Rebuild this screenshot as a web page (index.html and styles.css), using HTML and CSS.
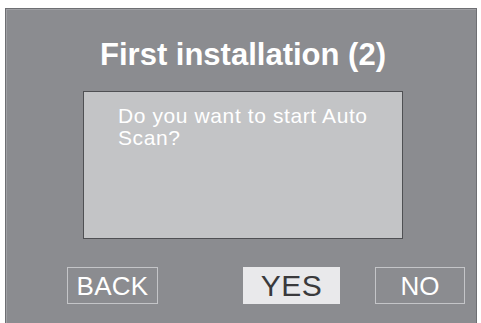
FILE: index.html
```html
<!DOCTYPE html>
<html>
<head>
<meta charset="utf-8">
<link rel="stylesheet" href="styles.css">
</head>
<body>
<div class="panel">
  <h1 class="title">First installation (2)</h1>
  <div class="message">Do you want to start Auto<br>Scan?</div>
  <div class="buttons">
    <div class="btn back">BACK</div>
    <div class="btn yes">YES</div>
    <div class="btn no">NO</div>
  </div>
</div>
</body>
</html>
```
FILE: styles.css
```css
html, body {
  margin: 0;
  padding: 0;
  background: #ffffff;
  width: 481px;
  height: 323px;
  overflow: hidden;
}
body {
  font-family: "Liberation Sans", Arial, sans-serif;
  padding-top: 8px;
  padding-left: 5px;
  box-sizing: border-box;
}
.panel {
  width: 472px;
  height: 320px;
  box-sizing: border-box;
  background: #8b8c90;
  border: 1px solid #6e6f73;
  box-shadow: inset 1px 1px 0 #9fa0a4;
  display: flex;
  flex-direction: column;
  padding-top: 28px;
}
.title {
  margin: 0;
  font-size: 31px;
  line-height: 36px;
  font-weight: bold;
  color: #ffffff;
  text-align: center;
  padding-left: 4px;
}
.message {
  margin: 18px 0 0 77px;
  width: 320px;
  height: 148px;
  box-sizing: border-box;
  background: #c3c4c6;
  border: 1px solid #4f5053;
  padding: 13px 0 0 34px;
  color: #ffffff;
  font-size: 21px;
  line-height: 22px;
  letter-spacing: 0.6px;
}
.buttons {
  display: flex;
  margin-top: 28px;
  padding-left: 61px;
}
.btn {
  height: 37px;
  box-sizing: border-box;
  border: 1px solid #c4c5c8;
  display: flex;
  align-items: center;
  justify-content: center;
  color: #ffffff;
  font-size: 26px;
  padding-top: 2px;
}
.back {
  width: 91px;
  letter-spacing: 0.3px;
}
.yes {
  width: 97px;
  margin-left: 85px;
  background: #e9e9eb;
  border-color: #e9e9eb;
  color: #3a3a3c;
  font-size: 30px;
  letter-spacing: 0.5px;
  padding-top: 0;
}
.no {
  width: 90px;
  margin-left: 35px;
  padding-top: 1px;
}
```
